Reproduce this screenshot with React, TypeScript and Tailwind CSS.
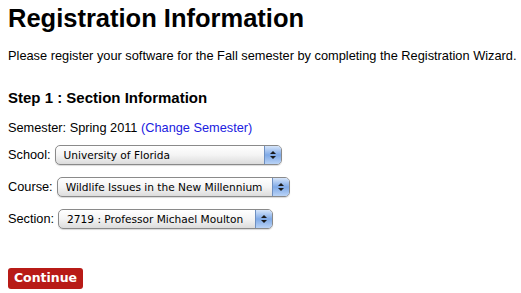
import React from 'react';

function FakeSelect({ value, width }: { value: string; width: string }) {
  return (
    <div
      className={`flex h-[20px] items-stretch overflow-hidden rounded-[5px] border border-[#8a8a8a] bg-gradient-to-b from-white via-[#f4f4f4] to-[#dcdcdc] shadow-[0_1px_1px_rgba(0,0,0,0.15)] ${width}`}
    >
      <span className="flex flex-1 items-center overflow-hidden whitespace-nowrap pl-[8px] font-['DejaVu_Sans',sans-serif] text-[10.6px] leading-none text-black">
        {value}
      </span>
      <span className="flex w-[17px] shrink-0 flex-col items-center justify-center gap-[2px] border-l border-[#6e8fc0] bg-gradient-to-b from-[#d6e5fa] via-[#7fa9e6] to-[#b9d3f6]">
        <svg width="6" height="3" viewBox="0 0 6 3">
          <path d="M0 3 L3 0 L6 3 Z" fill="#1a1a1a" />
        </svg>
        <svg width="6" height="3" viewBox="0 0 6 3">
          <path d="M0 0 L3 3 L6 0 Z" fill="#1a1a1a" />
        </svg>
      </span>
    </div>
  );
}

export default function App() {
  return (
    <div className="min-h-[293px] bg-white px-[8px] font-['Liberation_Sans',Arial,sans-serif] text-black">
      <h1 className="pt-[3px] text-[25.5px] font-bold leading-[30px]">Registration Information</h1>
      <p className="mt-[15px] whitespace-nowrap text-[12.8px] leading-[16px]">
        Please register your software for the Fall semester by completing the Registration Wizard.
      </p>

      <h2 className="mt-[25px] text-[15px] font-bold leading-[18px]">Step 1 : Section Information</h2>

      <p className="mt-[13px] text-[12.75px] leading-[16px]">
        Semester: Spring 2011 <a className="text-[#2020e0]">(Change Semester)</a>
      </p>

      <div className="mt-[9px] flex flex-col gap-[12px] text-[12.75px]">
        <div className="flex items-center gap-[4px]">
          <span>School:</span>
          <FakeSelect value="University of Florida" width="w-[227px]" />
        </div>
        <div className="flex items-center gap-[4px]">
          <span>Course:</span>
          <FakeSelect value="Wildlife Issues in the New Millennium" width="w-[233px]" />
        </div>
        <div className="flex items-center gap-[4px]">
          <span>Section:</span>
          <FakeSelect value="2719 : Professor Michael Moulton" width="w-[215px]" />
        </div>
      </div>

      <button className="mt-[39px] flex h-[21px] w-[75px] items-center justify-center rounded-[3px] bg-[#b81b17] font-['DejaVu_Sans',sans-serif] text-[12.5px] font-bold text-white">
        Continue
      </button>
    </div>
  );
}
